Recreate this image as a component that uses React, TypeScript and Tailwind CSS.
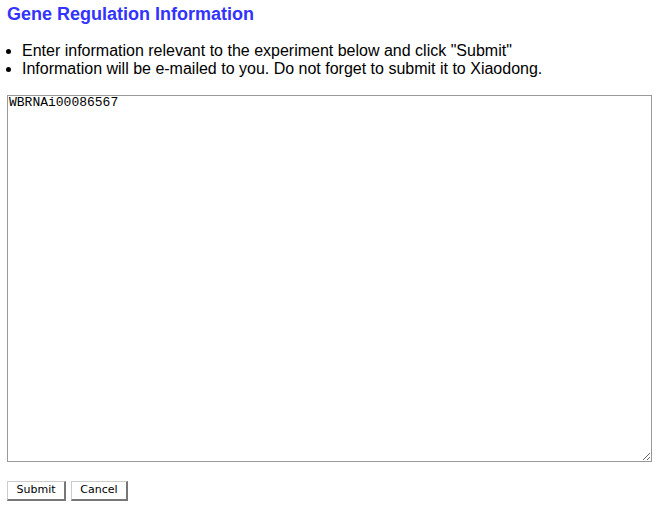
export default function App() {
  return (
    <div className="px-[7px] pt-[3px] text-black bg-white min-h-[511px]" style={{ fontFamily: '"Liberation Sans", Arial, sans-serif' }}>
      <h1 className="text-[18px] font-bold text-[#3333ff] leading-[22px]">Gene Regulation Information</h1>
      <ul className="mt-[17px] text-[16px] leading-[18px] list-disc pl-[15px]">
        <li className="leading-[18px]">Enter information relevant to the experiment below and click "Submit"</li>
        <li className="leading-[18px]">Information will be e-mailed to you. Do not forget to submit it to Xiaodong.</li>
      </ul>
      <textarea
        defaultValue="WBRNAi00086567"
        className="mt-[17px] block w-[645px] h-[367px] border border-[#999] px-[1px] py-0 text-[13px] leading-[14px] outline-none"
        style={{ fontFamily: '"Liberation Mono", "Courier New", monospace' }}
      />
      <div className="mt-[19px] flex gap-[5px]" style={{ fontFamily: '"DejaVu Sans", sans-serif' }}>
        <button className="w-[59px] h-[20px] bg-white text-[11px] border border-[#ccc] border-r-[#777] border-b-[#777] border-r-2 border-b-2">Submit</button>
        <button className="w-[57px] h-[20px] bg-white text-[11px] border border-[#ccc] border-r-[#777] border-b-[#777] border-r-2 border-b-2">Cancel</button>
      </div>
    </div>
  );
}
